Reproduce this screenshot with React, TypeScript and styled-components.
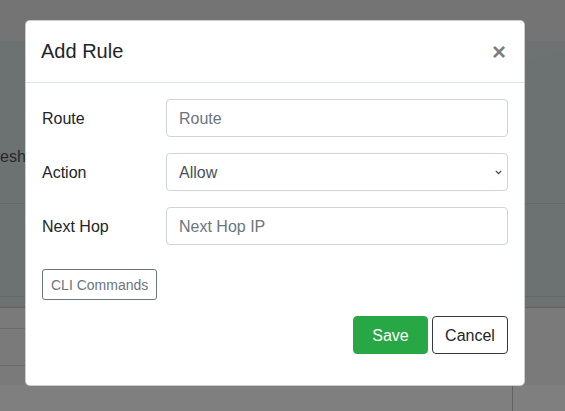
import React from "react";
import styled, { createGlobalStyle } from "styled-components";

const Global = createGlobalStyle`
  html, body { margin: 0; padding: 0; }
  body {
    font-family: "Liberation Sans", Arial, Helvetica, sans-serif;
    color: #212529;
    overflow: hidden;
  }
  * { box-sizing: border-box; }
`;

const Page = styled.div`
  position: relative;
  width: 565px;
  height: 411px;
  overflow: hidden;
  background: #ffffff;
  display: flex;
  flex-direction: column;
`;

const TopBar = styled.div`
  height: 41px;
  background: #e8e8e8;
  flex: none;
`;

const Hero = styled.div`
  position: relative;
  height: 163px;
  background: #d8e2e2;
  border-bottom: 1px solid #c9d2d2;
  display: flex;
  align-items: center;
  flex: none;
  overflow: hidden;
`;

const Wave = styled.svg`
  position: absolute;
  right: 0;
  top: 0;
`;

const HeroText = styled.span`
  font-size: 16px;
  color: #505454;
  margin-left: -24px;
  margin-top: 70px;
  white-space: nowrap;
`;

const SubPanel = styled.div`
  height: 93px;
  background: #d8e2e2;
  border-bottom: 1px solid #cbd3d3;
  flex: none;
`;

const Strip = styled.div`
  height: 11px;
  background: #dae3e3;
  border-bottom: 1px solid #bcc3c3;
  flex: none;
`;

const Lower = styled.div`
  flex: 1;
  display: grid;
  grid-template-columns: 512px 1fr;
  grid-template-rows: auto 1fr;
  background: #f4f4f4;
`;

const Table = styled.div`
  display: flex;
  flex-direction: column;
`;

const TableRow = styled.div<{ $h: number }>`
  height: ${(p) => p.$h}px;
  border-bottom: 1px solid #d6d6d6;
  flex: none;
`;

const Spacer = styled.div`
  height: 19px;
`;

const Bottom = styled.div`
  grid-column: 1 / span 2;
  background: #fefefe;
  display: flex;
  justify-content: flex-end;
`;

const BottomCell = styled.div`
  width: 53px;
  border-left: 1px solid #c4c8c8;
`;

const Backdrop = styled.div`
  position: absolute;
  inset: 0;
  background: rgba(0, 0, 0, 0.5);
`;

const Dialog = styled.div`
  position: absolute;
  left: 25px;
  top: 20px;
  width: 500px;
  background: #fff;
  border: 1px solid rgba(0, 0, 0, 0.2);
  border-radius: 5px;
  display: flex;
  flex-direction: column;
`;

const Header = styled.div`
  display: flex;
  align-items: center;
  justify-content: space-between;
  padding: 16px 16px 16px 15px;
  border-bottom: 1px solid #dee2e6;
`;

const Title = styled.h5`
  margin: 0;
  font-size: 20px;
  font-weight: 400;
  line-height: 29px;
  color: #212529;
`;

const Close = styled.button`
  border: 0;
  background: transparent;
  padding: 0;
  margin-right: 2px;
  font-family: "Liberation Sans", Arial, sans-serif;
  font-size: 24px;
  font-weight: 700;
  line-height: 1;
  color: #000;
  opacity: 0.5;
  cursor: pointer;
`;

const Body = styled.div`
  padding: 16px;
  display: flex;
  flex-direction: column;
`;

const FormRow = styled.div<{ $last?: boolean }>`
  display: grid;
  grid-template-columns: 124px 1fr;
  align-items: center;
  margin-bottom: ${(p) => (p.$last ? 24 : 16)}px;
`;

const Label = styled.label`
  font-size: 16px;
  padding-top: 2px;
  color: #212529;
`;

const fieldCss = `
  height: 38px;
  width: 100%;
  font-family: "Liberation Sans", Arial, sans-serif;
  font-size: 16px;
  color: #495057;
  background: #fff;
  border: 1px solid #ced4da;
  border-radius: 4px;
  outline: none;
`;

const Input = styled.input`
  ${fieldCss}
  padding: 7px 12px 5px;
  &::placeholder { color: #6c757d; opacity: 1; }
`;

const SelectWrap = styled.div`
  position: relative;
`;

const Select = styled.select`
  ${fieldCss}
  padding: 6px 12px;
  appearance: none;
  -webkit-appearance: none;
`;

const Chevron = styled.svg`
  position: absolute;
  right: 6px;
  top: 17px;
  pointer-events: none;
`;

const SmallButton = styled.button`
  align-self: flex-start;
  height: 31px;
  padding: 4px 8px;
  font-family: "Liberation Sans", Arial, sans-serif;
  font-size: 14px;
  color: #6c757d;
  background: #fff;
  border: 1px solid #6c757d;
  border-radius: 3px;
`;

const Footer = styled.div`
  display: flex;
  justify-content: flex-end;
  gap: 4px;
  padding: 0 16px 31px;
`;

const Button = styled.button<{ $variant: "success" | "dark"; $w: number }>`
  width: ${(p) => p.$w}px;
  height: 38px;
  padding: 1px 0 0;
  font-family: "Liberation Sans", Arial, sans-serif;
  font-size: 16px;
  border-radius: 4px;
  background: ${(p) => (p.$variant === "success" ? "#28a745" : "#fff")};
  color: ${(p) => (p.$variant === "success" ? "#fff" : "#212529")};
  border: 1px solid ${(p) => (p.$variant === "success" ? "#28a745" : "#343a40")};
`;

export default function App() {
  return (
    <>
      <Global />
      <Page>
        <TopBar />
        <Hero>
          <Wave width="120" height="60" viewBox="0 0 120 60">
            <path d="M0 60 Q60 20 120 10 L120 0 L0 0 Z" fill="#ffffff" opacity="0.12" />
          </Wave>
          <HeroText>Threshold</HeroText>
        </Hero>
        <SubPanel />
        <Strip />
        <Lower>
          <Table>
            <TableRow $h={21} />
            <TableRow $h={37} />
            <Spacer />
          </Table>
          <div />
          <Bottom>
            <BottomCell />
          </Bottom>
        </Lower>
        <Backdrop />
        <Dialog>
          <Header>
            <Title>Add Rule</Title>
            <Close aria-label="Close">×</Close>
          </Header>
          <Body>
            <FormRow>
              <Label>Route</Label>
              <Input placeholder="Route" />
            </FormRow>
            <FormRow>
              <Label>Action</Label>
              <SelectWrap>
                <Select defaultValue="Allow">
                  <option>Allow</option>
                  <option>Deny</option>
                </Select>
                <Chevron width="7" height="5" viewBox="0 0 7 5">
                  <path d="M0.8 0.8 L3.5 3.6 L6.2 0.8" fill="none" stroke="#343a40" strokeWidth="1.1" />
                </Chevron>
              </SelectWrap>
            </FormRow>
            <FormRow $last>
              <Label>Next Hop</Label>
              <Input placeholder="Next Hop IP" />
            </FormRow>
            <SmallButton>CLI Commands</SmallButton>
          </Body>
          <Footer>
            <Button $variant="success" $w={75}>Save</Button>
            <Button $variant="dark" $w={76}>Cancel</Button>
          </Footer>
        </Dialog>
      </Page>
    </>
  );
}
